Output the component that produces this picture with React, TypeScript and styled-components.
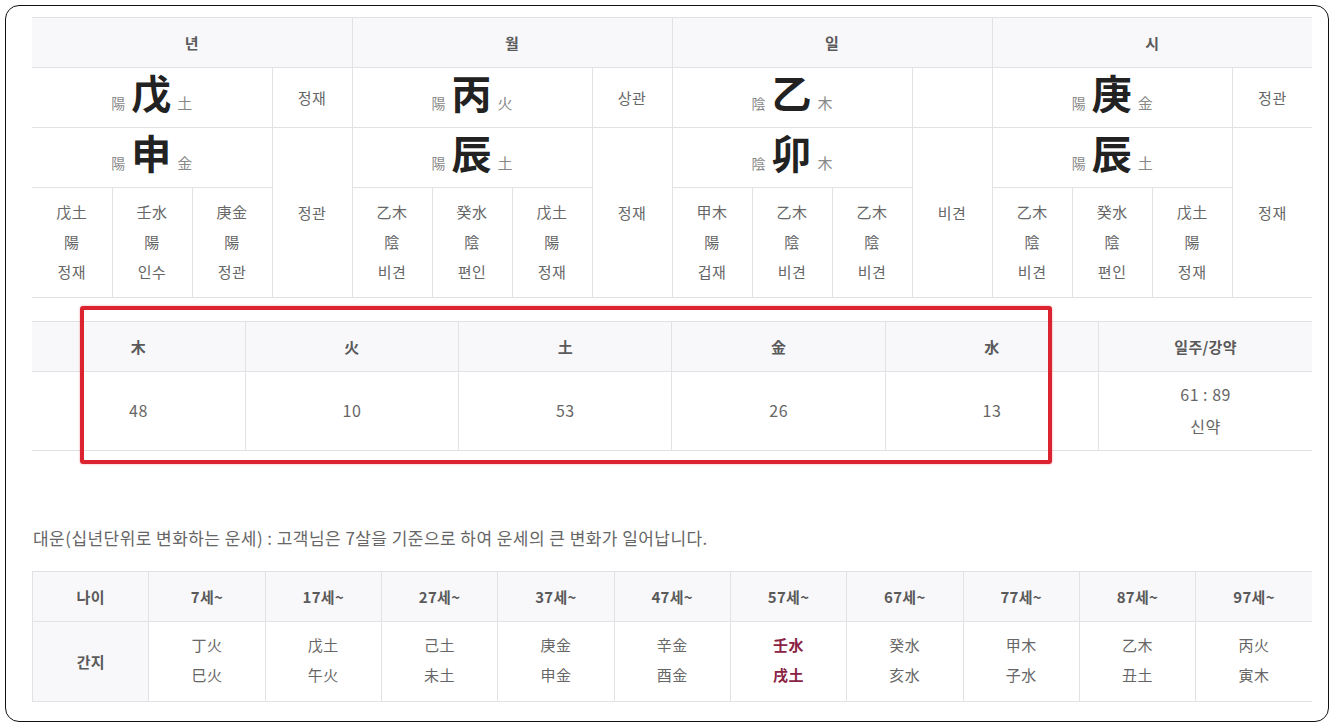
import React from "react";
import styled, { createGlobalStyle } from "styled-components";

const GlobalStyle = createGlobalStyle`
	html, body {
		margin: 0;
		padding: 0;
		background: #fff;
	}
	body {
		font-family: "Noto Sans CJK KR", "Noto Sans", sans-serif;
		color: #666;
	}
`;

interface Pillar {
	title: string;
	stem: { yy: string; ch: string; el: string; god: string };
	branch: { yy: string; ch: string; el: string; god: string };
	hidden: Array<[string, string, string]>;
}

const pillars: Pillar[] = [
	{
		title: "년",
		stem: { yy: "陽", ch: "戊", el: "土", god: "정재" },
		branch: { yy: "陽", ch: "申", el: "金", god: "정관" },
		hidden: [
			["戊土", "陽", "정재"],
			["壬水", "陽", "인수"],
			["庚金", "陽", "정관"],
		],
	},
	{
		title: "월",
		stem: { yy: "陽", ch: "丙", el: "火", god: "상관" },
		branch: { yy: "陽", ch: "辰", el: "土", god: "정재" },
		hidden: [
			["乙木", "陰", "비견"],
			["癸水", "陰", "편인"],
			["戊土", "陽", "정재"],
		],
	},
	{
		title: "일",
		stem: { yy: "陰", ch: "乙", el: "木", god: "" },
		branch: { yy: "陰", ch: "卯", el: "木", god: "비견" },
		hidden: [
			["甲木", "陽", "겁재"],
			["乙木", "陰", "비견"],
			["乙木", "陰", "비견"],
		],
	},
	{
		title: "시",
		stem: { yy: "陽", ch: "庚", el: "金", god: "정관" },
		branch: { yy: "陽", ch: "辰", el: "土", god: "정재" },
		hidden: [
			["乙木", "陰", "비견"],
			["癸水", "陰", "편인"],
			["戊土", "陽", "정재"],
		],
	},
];

const elements = [
	{ name: "木", value: "48" },
	{ name: "火", value: "10" },
	{ name: "土", value: "53" },
	{ name: "金", value: "26" },
	{ name: "水", value: "13" },
];

const daeun = [
	{ age: "7세~", top: "丁火", bottom: "巳火" },
	{ age: "17세~", top: "戊土", bottom: "午火" },
	{ age: "27세~", top: "己土", bottom: "未土" },
	{ age: "37세~", top: "庚金", bottom: "申金" },
	{ age: "47세~", top: "辛金", bottom: "酉金" },
	{ age: "57세~", top: "壬水", bottom: "戌土", current: true },
	{ age: "67세~", top: "癸水", bottom: "亥水" },
	{ age: "77세~", top: "甲木", bottom: "子水" },
	{ age: "87세~", top: "乙木", bottom: "丑土" },
	{ age: "97세~", top: "丙火", bottom: "寅木" },
];

const Frame = styled.div`
	box-sizing: border-box;
	margin: 5px 0 0 5px;
	width: 1324px;
	height: 717px;
	border: 1.5px solid #111;
	border-radius: 14px;
	padding: 11px 0 0 26px;
`;

const Table = styled.table`
	width: 1280px;
	border-collapse: collapse;
	table-layout: fixed;
	border-top: 1px solid #555;
	text-align: center;

	th,
	td {
		padding: 0;
		border: 1px solid #e2e2e4;
		vertical-align: middle;
	}
	tr > :first-child {
		border-left: none;
	}
	tr > :last-child {
		border-right: none;
	}
`;

const HeadCell = styled.th`
	height: 49px;
	background: #f8f8fa;
	font-size: 15px;
	font-weight: 700;
	color: #5a5a5a;
	letter-spacing: 0.3px;
`;

const PillarRow = styled.tr<{ $h: number }>`
	height: ${(p) => p.$h}px;
`;

const MainCell = styled.td`
	font-size: 15px;
	padding-bottom: 12px !important;
`;

const GodCell = styled.td`
	font-size: 15px;
	color: #666;
	letter-spacing: 0.5px;
`;

const YinYang = styled.span`
	font-size: 14px;
	color: #888;
`;

const BigChar = styled.span`
	display: inline-block;
	margin: 0 6px 0 6px;
	font-size: 40px;
	line-height: 46px;
	font-weight: 700;
	color: #222;
`;

const Element = styled.span`
	font-size: 15px;
	color: #888;
`;

const HiddenCell = styled.td`
	font-size: 15px;
	line-height: 30px;
	color: #666;
	letter-spacing: 0.5px;
	padding-bottom: 2px !important;
`;

const ElementWrap = styled.div`
	position: relative;
	margin-top: 23px;
`;

const ElementTable = styled(Table)`
	td {
		height: 76px;
		font-size: 16px;
		line-height: 32px;
		color: #666;
		letter-spacing: 0.5px;
		padding-bottom: 2px;
	}
`;

const Highlight = styled.div`
	position: absolute;
	left: 48px;
	top: -15px;
	width: 972px;
	height: 158px;
	box-sizing: border-box;
	border: 4.5px solid #dc2430;
	border-radius: 3px;
	box-shadow: 0 0 2px rgba(220, 36, 48, 0.5);
	pointer-events: none;
`;

const Notice = styled.p`
	margin: 75px 0 0 1px;
	font-size: 17px;
	line-height: 24px;
	color: #666;
	letter-spacing: 0.45px;
`;

const DaeunTable = styled(Table)`
	margin-top: 21px;
	border-left: 1px solid #e2e2e4;

	tr > :first-child {
		border-left: 1px solid #e2e2e4;
		background: #f8f8fa;
	}
`;

const DaeunCell = styled.td<{ $current?: boolean }>`
	height: 76px;
	font-size: 15px;
	line-height: 30px;
	letter-spacing: 0.5px;
	padding-bottom: 3px !important;
	color: ${(p) => (p.$current ? "#8a2244" : "#666")};
	font-weight: ${(p) => (p.$current ? 700 : 400)};
`;

const LabelCell = styled.td`
	font-size: 15px;
	font-weight: 700;
	color: #5a5a5a;
`;

const App = (): JSX.Element => {
	return (
		<>
			<GlobalStyle />
			<Frame>
				<Table>
					<colgroup>
						{Array.from({ length: 16 }).map((_, i) => (
							<col key={i} style={{ width: 80 }} />
						))}
					</colgroup>
					<thead>
						<tr>
							{pillars.map((p) => (
								<HeadCell key={p.title} colSpan={4}>
									{p.title}
								</HeadCell>
							))}
						</tr>
					</thead>
					<tbody>
						<PillarRow $h={60}>
							{pillars.map((p) => (
								<React.Fragment key={p.title}>
									<MainCell colSpan={3}>
										<YinYang>{p.stem.yy}</YinYang>
										<BigChar>{p.stem.ch}</BigChar>
										<Element>{p.stem.el}</Element>
									</MainCell>
									<GodCell>{p.stem.god}</GodCell>
								</React.Fragment>
							))}
						</PillarRow>
						<PillarRow $h={60}>
							{pillars.map((p) => (
								<React.Fragment key={p.title}>
									<MainCell colSpan={3}>
										<YinYang>{p.branch.yy}</YinYang>
										<BigChar>{p.branch.ch}</BigChar>
										<Element>{p.branch.el}</Element>
									</MainCell>
									<GodCell rowSpan={2}>{p.branch.god}</GodCell>
								</React.Fragment>
							))}
						</PillarRow>
						<PillarRow $h={110}>
							{pillars.map((p) => (
								<React.Fragment key={p.title}>
									{p.hidden.map((h, i) => (
										<HiddenCell key={i}>
											{h[0]}
											<br />
											{h[1]}
											<br />
											{h[2]}
										</HiddenCell>
									))}
								</React.Fragment>
							))}
						</PillarRow>
					</tbody>
				</Table>

				<ElementWrap>
					<ElementTable>
						<thead>
							<tr>
								{elements.map((e) => (
									<HeadCell key={e.name}>{e.name}</HeadCell>
								))}
								<HeadCell>일주/강약</HeadCell>
							</tr>
						</thead>
						<tbody>
							<tr>
								{elements.map((e) => (
									<td key={e.name}>{e.value}</td>
								))}
								<td>
									61 : 89
									<br />
									신약
								</td>
							</tr>
						</tbody>
					</ElementTable>
					<Highlight />
				</ElementWrap>

				<Notice>
					대운(십년단위로 변화하는 운세) : 고객님은 7살을 기준으로 하여 운세의 큰 변화가 일어납니다.
				</Notice>

				<DaeunTable>
					<thead>
						<tr>
							<HeadCell>나이</HeadCell>
							{daeun.map((d) => (
								<HeadCell key={d.age}>{d.age}</HeadCell>
							))}
						</tr>
					</thead>
					<tbody>
						<tr>
							<LabelCell>간지</LabelCell>
							{daeun.map((d) => (
								<DaeunCell key={d.age} $current={d.current}>
									{d.top}
									<br />
									{d.bottom}
								</DaeunCell>
							))}
						</tr>
					</tbody>
				</DaeunTable>
			</Frame>
		</>
	);
};

export default App;
